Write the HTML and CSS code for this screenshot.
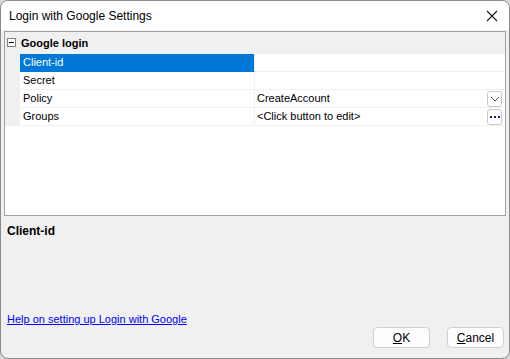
FILE: index.html
```html
<!DOCTYPE html>
<html>
<head>
<meta charset="utf-8">
<link rel="stylesheet" href="styles.css">
</head>
<body>
<div class="window">
  <div class="titlebar">
    <span class="title">Login with Google Settings</span>
    <svg class="close" width="12" height="12" viewBox="0 0 12 12"><path d="M1 1L11 11M11 1L1 11" stroke="#1a1a1a" stroke-width="1.1" fill="none"/></svg>
  </div>
  <div class="content">
    <div class="grid">
      <div class="cat">
        <span class="toggle"><span class="minus"></span></span>
        <span class="cat-label">Google login</span>
      </div>
      <div class="row selected">
        <div class="margin"></div>
        <div class="name">Client-id</div>
        <div class="value"></div>
      </div>
      <div class="row">
        <div class="margin"></div>
        <div class="name">Secret</div>
        <div class="value"></div>
      </div>
      <div class="row">
        <div class="margin"></div>
        <div class="name">Policy</div>
        <div class="value"><span class="vtext">CreateAccount</span>
          <span class="vbtn"><svg width="10" height="6" viewBox="0 0 10 6"><path d="M1 1L5 5L9 1" stroke="#606060" stroke-width="1" fill="none"/></svg></span>
        </div>
      </div>
      <div class="row">
        <div class="margin"></div>
        <div class="name">Groups</div>
        <div class="value"><span class="vtext">&lt;Click button to edit&gt;</span>
          <span class="vbtn dots"><i></i><i></i><i></i></span>
        </div>
      </div>
    </div>
    <div class="desc">
      <div class="desc-title">Client-id</div>
    </div>
    <div class="footer">
      <a class="help" href="#">Help on setting up Login with Google</a>
      <div class="buttons">
        <button class="btn"><u>O</u>K</button>
        <button class="btn"><u>C</u>ancel</button>
      </div>
    </div>
  </div>
</div>
</body>
</html>
```
FILE: styles.css
```css
html, body {
  margin: 0;
  padding: 0;
  background: #d8d8d8;
}
body {
  width: 510px;
  height: 359px;
  font-family: "Liberation Sans", Arial, sans-serif;
  font-size: 11px;
  color: #000;
}
.window {
  box-sizing: border-box;
  width: 510px;
  height: 359px;
  border: 1px solid #8a8a8a;
  border-radius: 8px;
  overflow: hidden;
  display: flex;
  flex-direction: column;
  background: #f0f0f0;
}
.titlebar {
  height: 29px;
  background: #fff;
  display: flex;
  align-items: center;
  justify-content: space-between;
  padding: 0 11px 0 8px;
  flex: none;
}
.title {
  font-size: 12px;
  color: #000;
}
.close {
  display: block;
}
.content {
  flex: 1;
  display: flex;
  flex-direction: column;
  padding: 1px 3px 0 3px;
}
.grid {
  box-sizing: border-box;
  height: 185px;
  border: 1px solid #a0a0a0;
  background: #fff;
  flex: none;
}
.cat {
  height: 21px;
  background: #f0f0f0;
  display: flex;
  align-items: center;
  padding-left: 2px;
  border-bottom: 1px solid #f0f0f0;
}
.toggle {
  box-sizing: border-box;
  width: 9px;
  height: 9px;
  border: 1px solid #808080;
  background: #fff;
  display: flex;
  align-items: center;
  justify-content: center;
  margin-right: 5px;
}
.minus {
  width: 5px;
  height: 1px;
  background: #000;
}
.cat-label {
  font-weight: bold;
  font-size: 11px;
}
.row {
  height: 18px;
  display: flex;
}
.margin {
  width: 15px;
  background: #f0f0f0;
  flex: none;
}
.name {
  box-sizing: border-box;
  width: 235px;
  flex: none;
  padding-left: 3px;
  line-height: 17px;
  border-bottom: 1px solid #f0f0f0;
  border-right: 1px solid #f0f0f0;
}
.row.selected .name {
  background: #0078d7;
  color: #fff;
  border-bottom-color: #0078d7;
}
.value {
  flex: 1;
  box-sizing: border-box;
  border-bottom: 1px solid #f0f0f0;
  padding-left: 2px;
  display: flex;
  align-items: center;
  justify-content: space-between;
  line-height: 17px;
}
.vtext {
  display: block;
}
.vbtn {
  box-sizing: border-box;
  width: 15px;
  height: 16px;
  border: 1px solid #c8c8c8;
  border-radius: 3px;
  background: #fff;
  display: flex;
  align-items: center;
  justify-content: center;
  margin-right: 3px;
}
.dots {
  gap: 2px;
}
.dots i {
  width: 2px;
  height: 2px;
  background: #202070;
  display: block;
}
.desc {
  padding: 8px 3px 0 3px;
  height: 80px;
  flex: none;
}
.desc-title {
  font-weight: bold;
  font-size: 12px;
}
.footer {
  flex: 1;
  display: flex;
  flex-direction: column;
  padding: 0 0 0 3px;
}
.help {
  color: #0000ff;
  font-size: 11px;
  display: block;
  margin-top: 9px;
}
.buttons {
  display: flex;
  justify-content: flex-end;
  gap: 17px;
  margin-top: 2px;
  padding-right: 2px;
}
.btn {
  box-sizing: border-box;
  width: 57px;
  height: 21px;
  border: 1px solid #d0d0d0;
  border-radius: 4px;
  background: #fdfdfd;
  font-family: "Liberation Sans", Arial, sans-serif;
  font-size: 12px;
  color: #000;
  padding: 0;
}
.btn u {
  text-decoration: underline;
}
```
